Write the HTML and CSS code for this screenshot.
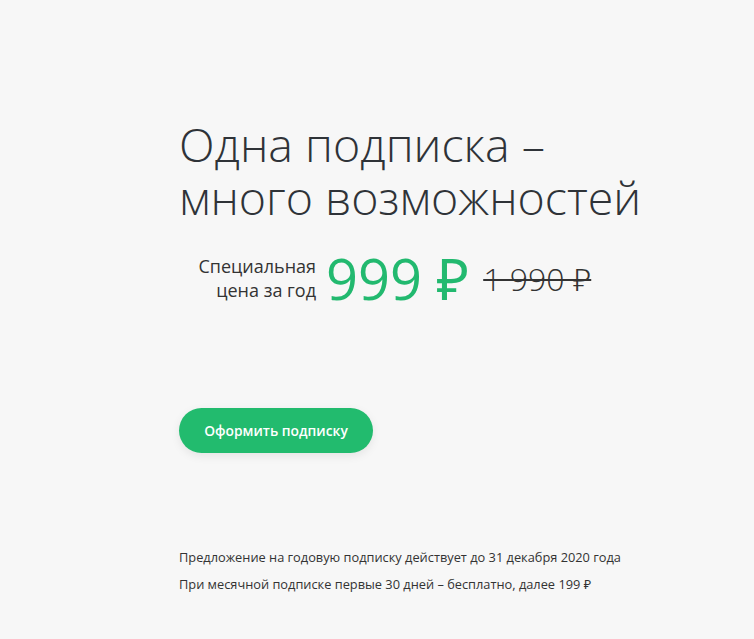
FILE: index.html
```html
<!DOCTYPE html>
<html lang="ru">
<head>
    <meta charset="UTF-8">
    <meta name="viewport" content="width=device-width, initial-scale=1.0">
    <title>Подписка</title>
    <link rel="stylesheet" href="styles.css">
</head>
<body>
    <main class="promo">
        <h1 class="promo-title">Одна подписка –<br>много возможностей</h1>
        <div class="price-row">
            <span class="price-label">Специальная<br>цена за год</span>
            <span class="price-new">999 ₽</span>
            <span class="price-old">1 990 ₽</span>
        </div>
        <button class="subscribe-btn">Оформить подписку</button>
        <div class="notes">
            <p>Предложение на годовую подписку действует до 31 декабря 2020 года</p>
            <p>При месячной подписке первые 30 дней – бесплатно, далее 199 ₽</p>
        </div>
    </main>
</body>
</html>
```

FILE: styles.css
```css
body {
    margin: 0;
    background-color: #f7f7f7;
    font-family: "Open Sans", "Noto Sans", sans-serif;
    color: #2f3338;
}
.promo {
    padding: 118px 0 0 179px;
}
.promo-title {
    margin: 0;
    font-size: 46.5px;
    font-weight: 300;
    line-height: 53px;
    color: #2f3338;
}
.price-row {
    display: flex;
    align-items: center;
    margin-top: 22px;
}
.price-label {
    width: 137px;
    text-align: right;
    font-size: 18px;
    line-height: 24px;
    color: #333;
}
.price-new {
    margin-left: 10px;
    font-size: 56px;
    line-height: 64px;
    color: #22b96f;
}
.price-old {
    margin-left: 14px;
    font-size: 32px;
    font-weight: 300;
    color: #333;
    text-decoration: line-through;
    text-decoration-thickness: 2px;
}
.subscribe-btn {
    margin-top: 98px;
    width: 194px;
    height: 45px;
    border: none;
    border-radius: 23px;
    background-color: #22bb6e;
    color: #fff;
    font-family: inherit;
    font-size: 13.8px;
    font-weight: 600;
    box-shadow: 0 3px 10px rgba(0, 0, 0, 0.08);
}
.notes {
    margin-top: 96px;
    font-size: 12.8px;
    color: #333;
}
.notes p {
    margin: 0 0 11px;
    line-height: 16px;
}
```
